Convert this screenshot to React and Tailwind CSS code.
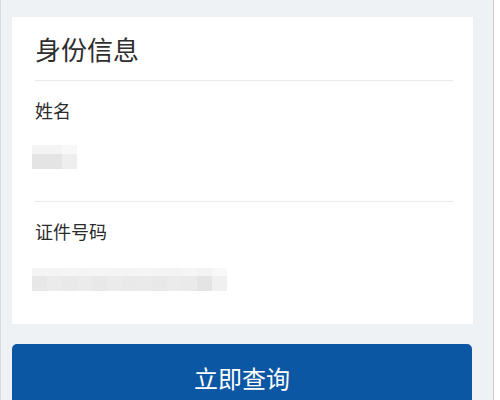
const nameBlur = [
  ['#f3f3f3', '#f3f3f3', '#f8f8f8'],
  ['#e4e4e4', '#e4e4e4', '#eeeeee'],
];

const idTop = ['#f4f4f4', '#f4f4f4', '#f5f5f5', '#f4f4f4', '#f5f5f5', '#f4f4f4', '#f4f4f4', '#f5f5f5', '#f4f4f4', '#f3f3f3', '#f5f5f5', '#f3f3f3', '#f8f8f8'];
const idBottom = ['#e7e7e7', '#ebebeb', '#e9e9e9', '#ebebeb', '#e8e8e8', '#ebebeb', '#e9e9e9', '#eaeaea', '#e8e8e8', '#ebebeb', '#eaeaea', '#e4e4e4', '#f0f0f0'];

const Mosaic = ({ rows, heights }) => (
  <div className="-ml-[3px] flex flex-col">
    {rows.map((row, r) => (
      <div key={r} className="flex">
        {row.map((c, i) => (
          <div key={i} className="w-[15px]" style={{ background: c, height: heights[r] }} />
        ))}
      </div>
    ))}
  </div>
);

const Field = ({ label, children, gap }) => (
  <div className="pt-[17px] pb-[32px] border-b border-[#e9eaeb] last:border-b-0">
    <div className="h-[24px] flex items-center text-[18px] text-[#2b2b2b]">{label}</div>
    <div className={gap}>{children}</div>
  </div>
);

export default function App() {
  return (
    <div
      className="w-[500px] h-[400px] overflow-hidden flex bg-white"
      style={{ fontFamily: '"Noto Sans CJK SC", "Noto Sans", sans-serif' }}
    >
      <div className="w-[494px] h-full bg-[#eef2f5] border-l border-[#d6dcdf] border-r border-r-[#c9cbcc] pl-[11px] pr-[20px] pt-[17px]">
        <div className="bg-white h-[307px] pl-[23px] pr-[20px] shadow-[0_0_2px_rgba(0,0,0,0.02)]">
          <div className="h-[64px] flex items-center border-b border-[#e9eaeb] text-[26px] text-[#2e2e2e]">
            身份信息
          </div>
          <Field label="姓名" gap="mt-[23px]">
            <Mosaic rows={nameBlur} heights={[9, 15]} />
          </Field>
          <div className="pt-[17px]">
            <div className="h-[24px] flex items-center text-[18px] text-[#2b2b2b]">证件号码</div>
            <div className="mt-[25px]">
              <Mosaic rows={[idTop, idBottom]} heights={[8, 15]} />
            </div>
          </div>
        </div>
        <button className="mt-[20px] w-[460px] h-[68px] rounded-[5px] bg-[#0c57a4] flex items-center justify-center text-[24px] text-white">
          立即查询
        </button>
      </div>
    </div>
  );
}
